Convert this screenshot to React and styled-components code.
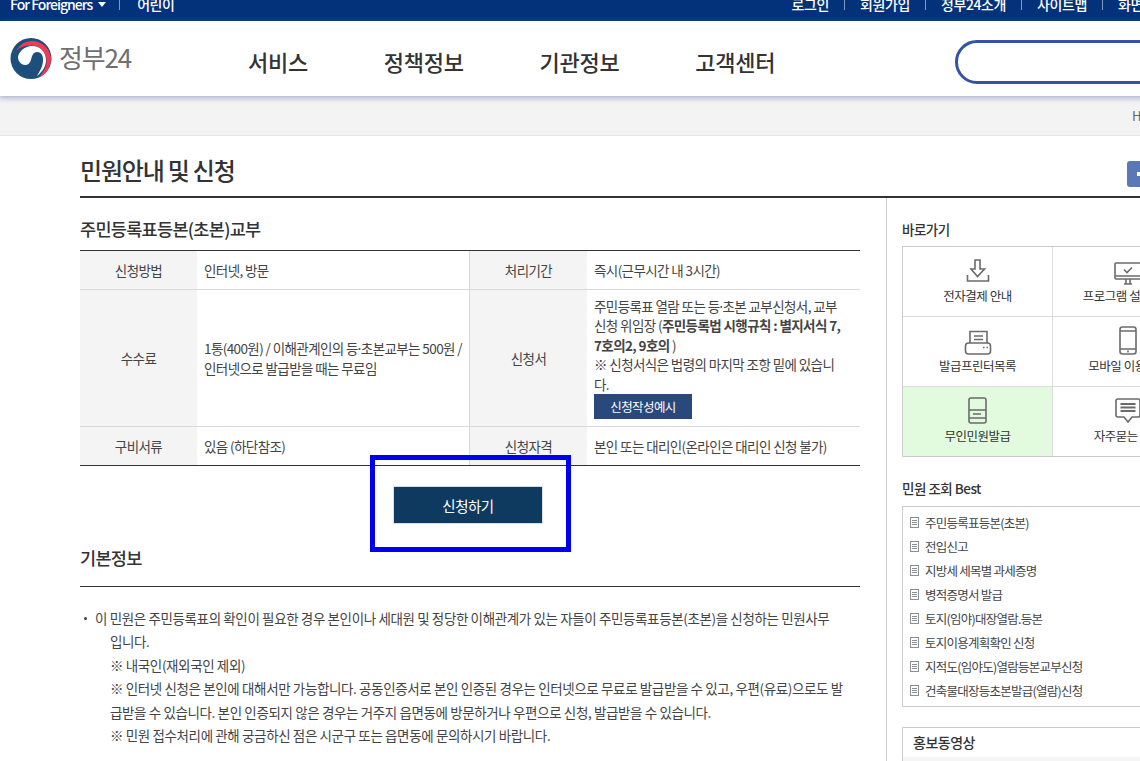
import React from 'react';
import styled, { createGlobalStyle } from 'styled-components';

const Global = createGlobalStyle`
  html, body { margin: 0; padding: 0; height: 761px; overflow: hidden; background: #fff; }
  body { font-family: "Noto Sans CJK KR", "Noto Sans", sans-serif; color: #333; font-size: 13px; }
  * { box-sizing: border-box; }
  ul { list-style: none; margin: 0; padding: 0; }
  h1, h2, h3, p { margin: 0; font-weight: 500; }
`;

const Page = styled.div`
  width: 1140px;
  height: 761px;
  overflow: hidden;
`;
const Scrolled = styled.div`
  width: 1400px;
  margin-top: -15px;
`;
const TopBar = styled.div`
  height: 36px;
  background: #03317a;
  display: flex;
  align-items: center;
  padding: 2px 0 0 10px;
  color: #fff;
  font-size: 14px;
  letter-spacing: -0.4px;
  line-height: 34px;
  font-weight: 500;
`;
const TopLeft = styled.span`
  display: flex;
  align-items: center;
  letter-spacing: -1px;
`;
const Caret = styled.span`
  width: 0;
  height: 0;
  margin-left: 6px;
  border-left: 4px solid transparent;
  border-right: 4px solid transparent;
  border-top: 5px solid #fff;
`;
const TopSep = styled.span`
  width: 1px;
  height: 11px;
  background: #7f98bd;
  margin: ${p => p.$m};
`;
const TopRight = styled.div`
  margin-left: 617px;
  display: flex;
  align-items: center;
  white-space: nowrap;
`;
const Header = styled.header`
  height: 75px;
  background: #fff;
  display: flex;
  align-items: center;
  position: relative;
  z-index: 1;
  box-shadow: 0 1px 6px 1px rgba(70, 90, 150, 0.45);
`;
const Logo = styled.div`
  width: 248px;
  display: flex;
  align-items: center;
  padding-left: 10px;
  gap: 7px;
`;
const LogoText = styled.span`
  font-size: 26px;
  color: #707070;
  font-weight: 400;
  letter-spacing: -1.2px;
  line-height: 30px;
  margin-top: -3px;
`;
const Nav = styled.nav`
  display: flex;
  gap: 76px;
  width: 707px;
  font-size: 22px;
  letter-spacing: -0.3px;
  font-weight: 500;
  color: #333;
  line-height: 30px;
  padding-top: 4px;
`;
const Search = styled.div`
  width: 300px;
  height: 44px;
  border: 3px solid #3553a3;
  border-radius: 22px;
  background: #fff;
  margin-top: 7px;
`;
const Crumbs = styled.div`
  height: 40px;
  background: #f4f3f4;
  border-bottom: 1px solid #e6e6e6;
  padding: 0 0 0 1132px;
  line-height: 40px;
  font-size: 13px;
  color: #666;
`;
const TitleBar = styled.div`
  height: 62px;
  margin-left: 80px;
  border-bottom: 2px solid #333;
  display: flex;
  align-items: center;
  position: relative;
`;
const PageTitle = styled.h1`
  font-size: 24px;
  letter-spacing: -1.2px;
  font-weight: 500;
  color: #333;
  line-height: 34px;
  margin-top: 8px;
`;
const PlusButton = styled.span`
  position: absolute;
  left: 1047px;
  top: 25px;
  width: 26px;
  height: 26px;
  background: #5a78b8;
  border-radius: 3px;
  &::before {
    content: '';
    position: absolute;
    left: 10px;
    right: 0;
    top: 11px;
    height: 4px;
    background: #fff;
  }
`;
const Columns = styled.div`
  display: flex;
  margin-left: 80px;
`;
const Main = styled.main`
  width: 780px;
`;
const SectionTitle = styled.h2`
  font-size: 17.5px;
  letter-spacing: -0.7px;
  line-height: 24px;
  font-weight: 500;
  color: #333;
`;
const TableTitle = styled(SectionTitle)`
  padding-top: 19px;
  height: 52px;
`;
const InfoTable = styled.div`
  display: grid;
  grid-template-columns: 117px 272px 1px 117px 273px;
  grid-template-rows: 38px 136px 38px;
  row-gap: 1px;
  border-top: 1px solid #333;
  border-bottom: 1px solid #333;
  background: #d9d9d9;
  font-size: 13.5px;
  letter-spacing: -0.6px;
  height: 216px;
`;
const Th = styled.div`
  background: #f4f4f4;
  display: flex;
  align-items: center;
  justify-content: center;
  color: #444;
`;
const Td = styled.div`
  background: #fff;
  padding: 0 0 0 7px;
  display: flex;
  flex-direction: column;
  justify-content: center;
  line-height: 20px;
  color: #444;
  white-space: nowrap;
`;
const Rule = styled.div`
  background: #d9d9d9;
`;
const FormText = styled.span`
  line-height: 19.5px;
`;
const Dot = styled.span`
  margin: 0 -2px;
`;
const ExampleBtn = styled.span`
  display: flex;
  align-items: center;
  justify-content: center;
  width: 98px;
  height: 25px;
  background: #29497c;
  color: #fff;
  font-size: 12.5px;
`;
const ApplyRow = styled.div`
  position: relative;
  height: 82px;
  display: flex;
  justify-content: center;
  padding: 20px 4px 0 0;
`;
const ApplyBtn = styled.span`
  width: 150px;
  height: 38px;
  background: #0e3a60;
  border: 1px solid #d7dde3;
  color: #fff;
  font-size: 14.5px;
  letter-spacing: -0.5px;
  display: flex;
  align-items: center;
  justify-content: center;
`;
const Highlight = styled.span`
  position: absolute;
  left: 290px;
  top: -11px;
  width: 201px;
  height: 97px;
  border: 5px solid #0000f0;
`;
const BasicTitle = styled(SectionTitle)`
  height: 41px;
  border-bottom: 1px solid #333;
  margin-top: -2px;
`;
const Body = styled.ul`
  padding: 20px 0 0 0;
  font-size: 13.5px;
  letter-spacing: -0.38px;
  line-height: 23.4px;
  color: #444;
  white-space: nowrap;
`;
const Bullet = styled.li`
  padding-left: 30px;
  text-indent: -15px;
  position: relative;
  &::before {
    content: '';
    position: absolute;
    left: 4px;
    top: 10px;
    width: 3px;
    height: 3px;
    border-radius: 50%;
    background: #444;
  }
`;
const Note = styled.li`
  padding-left: 30px;
`;
const Aside = styled.aside`
  margin-left: 26px;
  border-left: 1px solid #ccc;
  padding-left: 15px;
  height: 580px;
  width: 500px;
`;
const AsideTitle = styled.h3`
  font-size: 13.5px;
  font-weight: 500;
  letter-spacing: -0.5px;
  line-height: 20px;
  color: #333;
  height: ${p => p.$h}px;
  padding-top: 21px;
`;
const QuickGrid = styled.div`
  width: 301px;
  display: grid;
  grid-template-columns: 149px 150px;
  grid-auto-rows: 69px;
  gap: 1px;
  background: #dcdcdc;
  border: 1px solid #ccc;
`;
const QuickCell = styled.div`
  background: ${p => (p.$on ? '#e2fbde' : '#fff')};
  display: flex;
  flex-direction: column;
  align-items: center;
  padding-top: 9px;
  font-size: 12.5px;
  letter-spacing: -0.5px;
  color: #333;
  line-height: 18px;
  svg { display: block; margin-bottom: 1px; }
`;
const BestBox = styled.ul`
  width: 300px;
  height: 201px;
  border: 1px solid #ccc;
  padding: 4px 0 0 7px;
  font-size: 12.5px;
  letter-spacing: -0.75px;
  color: #444;
`;
const BestItem = styled.li`
  display: flex;
  align-items: center;
  gap: 6px;
  height: 23.9px;
`;
const Video = styled.div`
  width: 300px;
  margin-top: 20px;
  border: 1px solid #ccc;
  height: 60px;
`;
const VideoTitle = styled.h3`
  font-size: 14px;
  font-weight: 500;
  letter-spacing: -0.5px;
  padding: 4px 0 0 10px;
  height: 29px;
  line-height: 20px;
  color: #333;
`;
const VideoBody = styled.div`
  height: 28px;
  background: #f5f5f5;
`;
const Strong = styled.b`
  font-weight: 700;
`;

const TopItems = ['로그인', '회원가입', '정부24소개', '사이트맵', '화면크기'];

const Taegeuk = () => (
  <svg width="42" height="41" viewBox="0 0 42 41">
    <circle cx="21" cy="20.5" r="20.5" fill="#1c4f7c" />
    <path fill="#ee3a57" d="M6 13C10 6 16 2.500 23 3 33 3.500 41 12 41 21 41 30 35 37 28 40 33 35 37 29 36.500 22 36 14 30 8 22 7.500 15 7 10 9 6 13Z" />
    <path fill="#fff" d="M8 19C9 13 15 8 22 8 30 8 36 14 36 22 36 29 32 34 27 38 30 33 33 28 33 22 33 17 31 14 27 14 23 14 22 18 21 22 20 25 18 27 15 27 11 27 8 23 8 19Z" />
  </svg>
);
const Svg = ({ dy = 0, children }) => (
  <svg width="30" height="30" viewBox={`0 ${-dy} 30 30`} fill="none" stroke="#6b6b6b" strokeWidth="1.6">{children}</svg>
);
const IconDown = () => (
  <Svg dy={4}><path d="M12 0h5v9h4.500L14.500 16.500 8 9h4z" /><path d="M4.500 15v6h21v-6" /></Svg>
);
const IconMonitor = () => (
  <Svg dy={3}><rect x="2" y="4" width="26" height="16" rx="1" /><path d="M2 17h26M11 25h8M13 20v5M17 20v5M11 10.500l3 3 5-5" /></Svg>
);
const IconPrinter = () => (
  <Svg dy={3}><path d="M7 14V2.500h17V14M11 7h9M11 10.500h9" /><rect x="2.500" y="14" width="25" height="11" rx="3" /><path d="M20 18.500h1.500M23.500 18.500h1.500" /></Svg>
);
const IconPhone = () => (
  <Svg><rect x="7" y="1" width="16" height="27" rx="2.500" /><path d="M7 5h16M7 23h16M15 24.500v2" /></Svg>
);
const IconKiosk = () => (
  <Svg><rect x="6" y="2" width="17" height="25" rx="2" /><path d="M6 14h17M6 22h17M10 18h8" /></Svg>
);
const IconChat = () => (
  <Svg><path d="M5 3h20a2 2 0 0 1 2 2v14a2 2 0 0 1-2 2h-6l-4 5-4-5H5a2 2 0 0 1-2-2V5a2 2 0 0 1 2-2z" /><path d="M7.500 8h15M7.500 11.500h15M7.500 15h15" strokeWidth="2" /></Svg>
);
const DocIcon = () => (
  <svg width="9" height="11" viewBox="0 0 9 11" fill="none" stroke="#8a8f96" strokeWidth="1">
    <rect x="0.500" y="0.500" width="8" height="10" /><path d="M2 3.500h5M2 5.500h5M2 7.500h5" />
  </svg>
);

const bestItems = ['주민등록표등본(초본)', '전입신고', '지방세 세목별 과세증명', '병적증명서 발급', '토지(임야)대장열람.등본', '토지이용계획확인 신청', '지적도(임야도)열람등본교부신청', '건축물대장등초본발급(열람)신청'];

export default function App() {
  return (
    <Page>
      <Global />
      <Scrolled>
        <TopBar>
          <TopLeft>For Foreigners<Caret /></TopLeft>
          <TopSep $m="0 17px 0 13px" />
          <span>어린이</span>
          <TopRight>
            {TopItems.map((t, i) => (
              <React.Fragment key={t}>
                {i > 0 && <TopSep $m="0 15px" />}
                <span>{t}</span>
              </React.Fragment>
            ))}
          </TopRight>
        </TopBar>
        <Header>
          <Logo><Taegeuk /><LogoText>정부24</LogoText></Logo>
          <Nav><span>서비스</span><span>정책정보</span><span>기관정보</span><span>고객센터</span></Nav>
          <Search />
        </Header>
        <Crumbs>Home</Crumbs>
        <TitleBar>
          <PageTitle>민원안내 및 신청</PageTitle>
          <PlusButton />
        </TitleBar>
        <Columns>
          <Main>
            <TableTitle>주민등록표등본(초본)교부</TableTitle>
            <InfoTable>
              <Th>신청방법</Th>
              <Td>인터넷, 방문</Td>
              <Rule />
              <Th>처리기간</Th>
              <Td>즉시(근무시간 내 3시간)</Td>
              <Th>수수료</Th>
              <Td><span>1통(400원) / 이해관계인의 등<Dot>·</Dot>초본교부는 500원 /<br />인터넷으로 발급받을 때는 무료임</span></Td>
              <Rule />
              <Th>신청서</Th>
              <Td>
                <FormText>주민등록표 열람 또는 등<Dot>·</Dot>초본 교부신청서, 교부<br />신청 위임장 (<Strong>주민등록법 시행규칙 : 별지서식 7,<br />7호의2, 9호의</Strong> )<br />※ 신청서식은 법령의 마지막 조항 밑에 있습니<br />다.</FormText>
                <ExampleBtn>신청작성예시</ExampleBtn>
              </Td>
              <Th>구비서류</Th>
              <Td>있음 (하단참조)</Td>
              <Rule />
              <Th>신청자격</Th>
              <Td>본인 또는 대리인(온라인은 대리인 신청 불가)</Td>
            </InfoTable>
            <ApplyRow>
              <ApplyBtn>신청하기</ApplyBtn>
              <Highlight />
            </ApplyRow>
            <BasicTitle>기본정보</BasicTitle>
            <Body>
              <Bullet>이 민원은 주민등록표의 확인이 필요한 경우 본인이나 세대원 및 정당한 이해관계가 있는 자들이 주민등록표등본(초본)을 신청하는 민원사무<br />입니다.</Bullet>
              <Note>※ 내국인(재외국인 제외)</Note>
              <Note>※ 인터넷 신청은 본인에 대해서만 가능합니다. 공동인증서로 본인 인증된 경우는 인터넷으로 무료로 발급받을 수 있고, 우편(유료)으로도 발<br />급받을 수 있습니다. 본인 인증되지 않은 경우는 거주지 읍면동에 방문하거나 우편으로 신청, 발급받을 수 있습니다.</Note>
              <Note>※ 민원 접수처리에 관해 궁금하신 점은 시군구 또는 읍면동에 문의하시기 바랍니다.</Note>
            </Body>
          </Main>
          <Aside>
            <AsideTitle $h={48}>바로가기</AsideTitle>
            <QuickGrid>
              <QuickCell><IconDown />전자결제 안내</QuickCell>
              <QuickCell><IconMonitor />프로그램 설치안내</QuickCell>
              <QuickCell><IconPrinter />발급프린터목록</QuickCell>
              <QuickCell><IconPhone />모바일 이용안내</QuickCell>
              <QuickCell $on><IconKiosk />무인민원발급</QuickCell>
              <QuickCell><IconChat />자주묻는 질문</QuickCell>
            </QuickGrid>
            <AsideTitle $h={49}>민원 조회 Best</AsideTitle>
            <BestBox>
              {bestItems.map(t => <BestItem key={t}><DocIcon /><span>{t}</span></BestItem>)}
            </BestBox>
            <Video>
              <VideoTitle>홍보동영상</VideoTitle>
              <VideoBody />
            </Video>
          </Aside>
        </Columns>
      </Scrolled>
    </Page>
  );
}
